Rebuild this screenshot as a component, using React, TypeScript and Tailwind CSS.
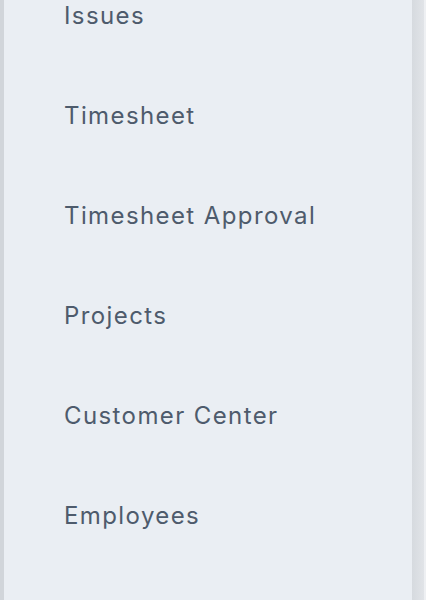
const items = [
  "Issues",
  "Timesheet",
  "Timesheet Approval",
  "Projects",
  "Customer Center",
  "Employees",
];

export default function App() {
  return (
    <div className="h-[600px] w-[426px] overflow-hidden flex bg-[#e8ebef]">
      {/* bande gauche */}
      <div className="w-[4px] bg-[#d1d5da]" />
      <nav className="flex-1 bg-[#eaeef3] overflow-hidden">
        <ul className="-mt-[34px]">
          {items.map((label) => (
            <li
              key={label}
              className="h-[100px] flex items-center pl-[60px] text-[24px] text-[#4e5b6c] font-['Inter',sans-serif] tracking-[1.4px]"
            >
              {label}
            </li>
          ))}
        </ul>
      </nav>
      {/* ombre droite */}
      <div className="w-[12px] bg-gradient-to-r from-[#d6dadf] to-[#e1e4e8]" />
      <div className="w-[2px] bg-[#eef0f3]" />
    </div>
  );
}
